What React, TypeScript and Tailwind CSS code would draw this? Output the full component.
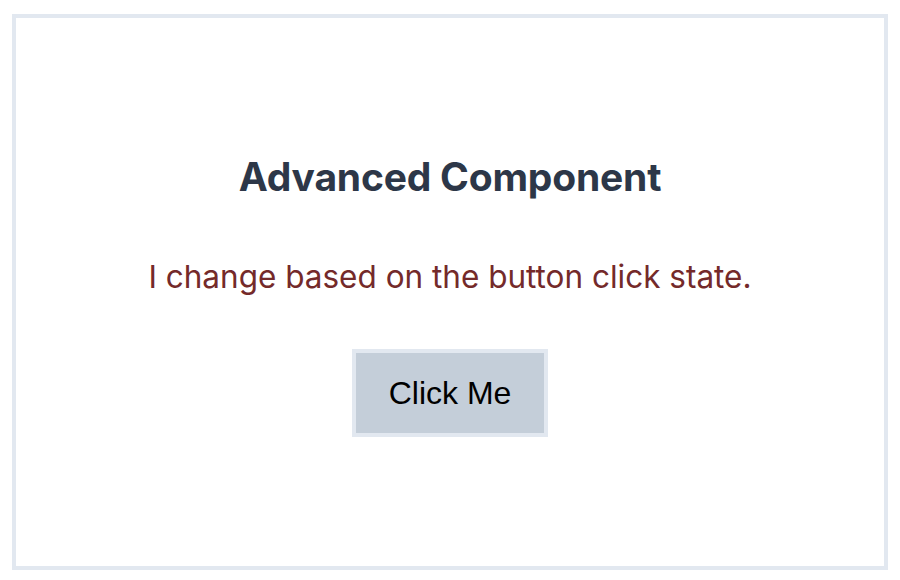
import { useState } from "react";

export default function App() {
  const [clicked, setClicked] = useState(false);

  return (
    <div className="w-[900px] h-[580px] bg-white pt-[14px] px-[12px]">
      <div className="h-[556px] border-4 border-[#e2e8f0] flex flex-col items-center justify-center pt-[10px]">
        <h1 className="font-['Inter',sans-serif] font-bold text-[39px] leading-none text-[#2d3748] tracking-[-0.2px]">
          Advanced Component
        </h1>
        <p className="mt-[65px] font-['Inter',sans-serif] text-[31.5px] leading-none text-[#742a2a]">
          {clicked ? "You clicked the button!" : "I change based on the button click state."}
        </p>
        <button
          onClick={() => setClicked((c) => !c)}
          className="mt-[56px] w-[196px] h-[88px] border-4 border-[#e2e8f0] bg-[#c4ced9] font-['Liberation_Sans',Arial,sans-serif] text-[32px] text-black"
        >
          Click Me
        </button>
      </div>
    </div>
  );
}
